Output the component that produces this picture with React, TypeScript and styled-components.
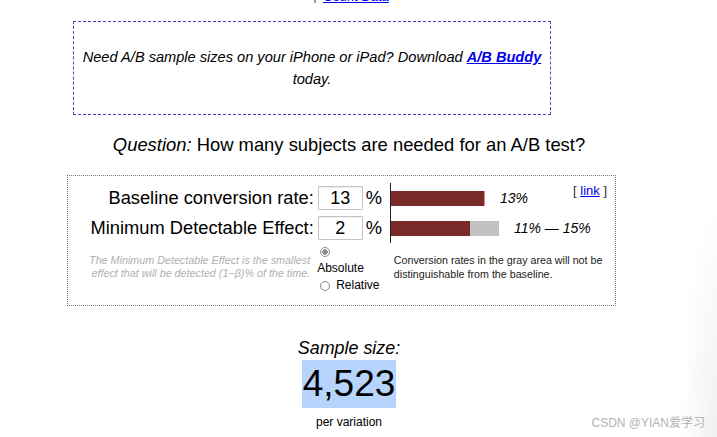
import React from 'react';
import styled, { createGlobalStyle } from 'styled-components';

const GlobalStyle = createGlobalStyle`
    html, body {
        margin: 0;
        padding: 0;
        background: #ffffff;
    }
    body {
        font-family: 'Liberation Sans', Arial, Helvetica, sans-serif;
        color: #000000;
    }
`;

const Page = styled.div({
    position: 'relative',
    width: '717px',
    height: '437px',
    overflow: 'hidden',
    background: '#ffffff',
});

const NavLine = styled.div({
    marginTop: '-11px',
    paddingLeft: '314px',
    height: '15px',
    fontSize: '13px',
    lineHeight: '15px',
    display: 'flex',
    alignItems: 'center',
    gap: '7px',
});

const NavBar = styled.span({
    display: 'inline-block',
    width: '2px',
    height: '13px',
    background: '#999999',
});

const Link = styled.a({
    color: '#0000ee',
    textDecoration: 'underline',
    cursor: 'pointer',
});

const Promo = styled.div({
    boxSizing: 'border-box',
    marginTop: '17px',
    marginLeft: '73px',
    width: '478px',
    height: '94px',
    border: '1.5px dashed #4b3fb3',
    display: 'flex',
    alignItems: 'center',
    justifyContent: 'center',
    padding: '0 4px',
    textAlign: 'center',
    fontStyle: 'italic',
    fontSize: '14.6px',
    lineHeight: '22px',
});

const BoldLink = styled(Link)({
    fontWeight: 'bold',
    whiteSpace: 'nowrap',
});

const Question = styled.div({
    width: '698px',
    marginTop: '20px',
    textAlign: 'center',
    fontSize: '18.4px',
    lineHeight: '20px',
});

const Calc = styled.div({
    boxSizing: 'border-box',
    marginTop: '20px',
    marginLeft: '67px',
    width: '549px',
    height: '131px',
    border: '1px dotted #777777',
    paddingTop: '7px',
});

const TopSection = styled.div({
    display: 'flex',
});

const Inputs = styled.div({
    width: '322px',
    display: 'flex',
    flexDirection: 'column',
});

const InputRow = styled.div({
    height: '30px',
    display: 'flex',
    alignItems: 'center',
    justifyContent: 'flex-end',
    paddingRight: '8px',
    fontSize: '18.3px',
});

const Label = styled.span({
    marginRight: '4px',
});

const NumberInput = styled.input({
    boxSizing: 'border-box',
    width: '45px',
    height: '24px',
    border: '1px solid #c4c4c4',
    borderRadius: '1px',
    boxShadow: 'inset 0 1px 1px rgba(0,0,0,0.06)',
    fontFamily: "'Liberation Sans', Arial, sans-serif",
    fontSize: '18px',
    textAlign: 'center',
    padding: '0',
    color: '#000000',
});

const Pct = styled.span({
    marginLeft: '3px',
});

const Chart = styled.div({
    flex: '1',
    height: '60px',
    borderLeft: '1px solid #222222',
    display: 'flex',
    flexDirection: 'column',
});

const ChartRow = styled.div({
    height: '30px',
    display: 'flex',
    alignItems: 'center',
});

const Bar = styled.div<{ $width: number; $color: string }>(({ $width, $color }) => ({
    width: `${$width}px`,
    height: '15px',
    background: $color,
    flexShrink: 0,
}));

const BarLabel = styled.span<{ $gap: number }>(({ $gap }) => ({
    marginLeft: `${$gap}px`,
    fontStyle: 'italic',
    fontSize: '14px',
    whiteSpace: 'nowrap',
}));

const LinkBox = styled.span({
    marginLeft: 'auto',
    marginRight: '8px',
    alignSelf: 'flex-start',
    marginTop: '1px',
    fontSize: '13px',
    lineHeight: '14px',
    color: '#333333',
});

const BottomSection = styled.div({
    display: 'flex',
    alignItems: 'flex-start',
});

const Note = styled.div({
    width: '224px',
    marginLeft: '19px',
    marginTop: '11px',
    textAlign: 'right',
    fontStyle: 'italic',
    fontSize: '10.75px',
    lineHeight: '13px',
    color: '#b0b0b0',
    whiteSpace: 'nowrap',
});

const Radios = styled.div({
    marginLeft: '7px',
    width: '66px',
    fontSize: '12px',
    lineHeight: '17px',
});

const RadioLine = styled.div({
    display: 'flex',
    alignItems: 'center',
    height: '17px',
});

const Radio = styled.span<{ $checked?: boolean }>(({ $checked }) => ({
    boxSizing: 'border-box',
    display: 'inline-block',
    width: '10px',
    height: '10px',
    borderRadius: '50%',
    border: '1px solid #8a8a8a',
    marginLeft: '3px',
    marginRight: '6px',
    background: $checked ? 'radial-gradient(circle, #8a8a8a 0 2.5px, #ffffff 3px)' : '#ffffff',
}));

const Explanation = styled.div({
    marginLeft: '11px',
    marginTop: '10px',
    width: '222px',
    fontSize: '10.7px',
    lineHeight: '14px',
    color: '#222222',
});

const Result = styled.div({
    width: '698px',
    marginTop: '32px',
    textAlign: 'center',
});

const ResultTitle = styled.div({
    fontStyle: 'italic',
    fontSize: '17.9px',
    lineHeight: '20px',
});

const BigNumber = styled.div({
    display: 'inline-block',
    marginTop: '2px',
    padding: '0 1px',
    background: '#b6d4fc',
    fontSize: '37px',
    lineHeight: '48px',
});

const PerVariation = styled.div({
    marginTop: '7px',
    fontSize: '12px',
    lineHeight: '14px',
});

const Watermark = styled.div({
    position: 'absolute',
    right: '12px',
    bottom: '7px',
    fontSize: '12px',
    color: '#b3b3b3',
    fontFamily: "'Liberation Sans', 'Noto Sans CJK SC', sans-serif",
});

const EdgeShade = styled.div({
    position: 'absolute',
    right: '0',
    bottom: '0',
    width: '36px',
    height: '240px',
    background: 'radial-gradient(ellipse at 100% 100%, rgba(0,0,0,0.06), rgba(0,0,0,0) 70%)',
    pointerEvents: 'none',
});

const App: React.FC = () => {
    return (
        <Page>
            <GlobalStyle />
            <NavLine>
                <NavBar />
                <Link>Count Data</Link>
            </NavLine>
            <Promo>
                <span>
                    Need A/B sample sizes on your iPhone or iPad? Download <BoldLink>A/B Buddy</BoldLink> today.
                </span>
            </Promo>
            <Question>
                <i>Question:</i> How many subjects are needed for an A/B test?
            </Question>
            <Calc>
                <TopSection>
                    <Inputs>
                        <InputRow>
                            <Label>Baseline conversion rate:</Label>
                            <NumberInput defaultValue='13' />
                            <Pct>%</Pct>
                        </InputRow>
                        <InputRow>
                            <Label>Minimum Detectable Effect:</Label>
                            <NumberInput defaultValue='2' />
                            <Pct>%</Pct>
                        </InputRow>
                    </Inputs>
                    <Chart>
                        <ChartRow>
                            <Bar $width={93} $color='#7b2a2a' />
                            <Bar $width={1} $color='#d98c8c' />
                            <BarLabel $gap={15}>13%</BarLabel>
                            <LinkBox>
                                [ <Link>link</Link> ]
                            </LinkBox>
                        </ChartRow>
                        <ChartRow>
                            <Bar $width={79} $color='#7b2a2a' />
                            <Bar $width={29} $color='#c2c2c2' />
                            <BarLabel $gap={15}>11% — 15%</BarLabel>
                        </ChartRow>
                    </Chart>
                </TopSection>
                <BottomSection>
                    <Note>
                        The Minimum Detectable Effect is the smallest
                        <br />
                        effect that will be detected (1−β)% of the time.
                    </Note>
                    <Radios>
                        <RadioLine>
                            <Radio $checked />
                        </RadioLine>
                        <RadioLine>Absolute</RadioLine>
                        <RadioLine>
                            <Radio />
                            Relative
                        </RadioLine>
                    </Radios>
                    <Explanation>
                        Conversion rates in the gray area will not be distinguishable from the baseline.
                    </Explanation>
                </BottomSection>
            </Calc>
            <Result>
                <ResultTitle>Sample size:</ResultTitle>
                <BigNumber>4,523</BigNumber>
                <PerVariation>per variation</PerVariation>
            </Result>
            <Watermark>CSDN @YIAN爱学习</Watermark>
            <EdgeShade />
        </Page>
    );
};

export default App;
